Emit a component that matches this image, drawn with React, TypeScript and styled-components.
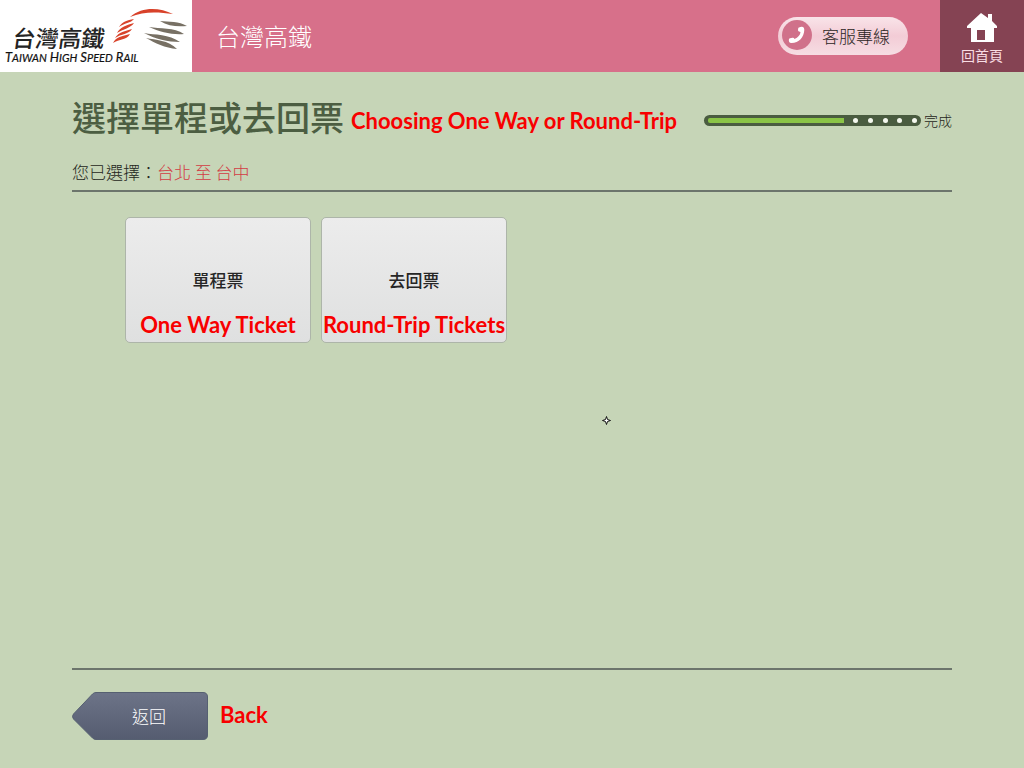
import React from "react";
import styled, { createGlobalStyle } from "styled-components";

const cjk = `"Noto Sans CJK TC", "Noto Sans", sans-serif`;
const latin = `Lato, "Open Sans", sans-serif`;

const GlobalStyle = createGlobalStyle`
  *, *::before, *::after { box-sizing: border-box; }
  body {
    margin: 0;
    background: #c6d5b7;
    color: #1f2620;
    font-family: ${cjk};
  }
  button { font-family: inherit; cursor: pointer; }
`;

const Page = styled.div`
  position: relative;
  display: flex;
  flex-direction: column;
  min-height: 100vh;
`;

const Header = styled.header`
  display: flex;
  height: 72px;
  background: #d7708a;
`;

const LogoLink = styled.a`
  display: flex;
  width: 192px;
  background: #fff;
`;

const SiteName = styled.div`
  flex: 1;
  align-self: center;
  padding-left: 24px;
  color: #fff;
  font-size: 24px;
  font-weight: 300;
  line-height: 32px;
`;

const HotlineButton = styled.button`
  display: flex;
  align-items: center;
  align-self: center;
  gap: 10px;
  width: 130px;
  height: 38px;
  margin-right: 32px;
  padding: 0 4px 2px;
  border: 0;
  border-radius: 19px;
  background: linear-gradient(#f9e4e9, #f3ccd6 50%, #f6dde3);
  color: #2a1f23;
  font-size: 17px;
  font-weight: 300;
  white-space: nowrap;
`;

const HomeLink = styled.a`
  display: flex;
  flex-direction: column;
  align-items: center;
  gap: 3px;
  width: 84px;
  padding-top: 12px;
  background: #854353;
  color: #f9dde4;
  font-size: 14px;
  line-height: 20px;
  text-decoration: none;
`;

const Content = styled.main`
  display: flex;
  flex: 1;
  flex-direction: column;
  padding: 24px 72px 0;
`;

const TitleRow = styled.div`
  display: flex;
  align-items: center;
  height: 48px;
`;

const Title = styled.h1`
  align-self: flex-start;
  margin: 0;
  color: #4c5e42;
  font-size: 34px;
  font-weight: 500;
  line-height: 42px;
  white-space: nowrap;
`;

const Note = styled.span`
  color: #f80000;
  font-family: ${latin};
  font-size: 22px;
  font-weight: 700;
  line-height: 28px;
  white-space: nowrap;
`;

const TitleNote = styled(Note)`
  margin-left: 7px;
  padding-top: 2px;
`;

const Progress = styled.div`
  display: flex;
  align-items: center;
  gap: 3px;
  margin-left: auto;
  font-size: 14px;
  line-height: 20px;
  font-weight: 300;
  white-space: nowrap;
`;

const Track = styled.div`
  display: flex;
  align-items: center;
  width: 217px;
  height: 11px;
  padding: 0 4px;
  border-radius: 6px;
  background: #4a5c40;
`;

const Fill = styled.div`
  flex: 1;
  height: 5px;
  border-radius: 2px 0 0 2px;
  background: #8ac446;
`;

const Dots = styled.div`
  display: flex;
  justify-content: space-between;
  width: 73px;
  padding-left: 9px;
`;

const Dot = styled.i`
  width: 5px;
  height: 5px;
  border-radius: 50%;
  background: #f4f8ee;
`;

const Selection = styled.p`
  margin: 0;
  padding: 16px 0 6px;
  border-bottom: 2px solid #6c756c;
  font-size: 17px;
  font-weight: 300;
  line-height: 24px;
`;

const Route = styled.span`
  color: #d23c44;
`;

const Tickets = styled.div`
  display: flex;
  flex-wrap: wrap;
  gap: 10px;
  padding: 25px 53px;
`;

const TicketButton = styled.button`
  display: flex;
  flex-direction: column;
  align-items: center;
  justify-content: flex-end;
  gap: 19px;
  width: 186px;
  height: 126px;
  padding: 0 0 3px;
  border: 1px solid #adb5a9;
  border-radius: 5px;
  background: linear-gradient(#ececec, #dfe0e0);
  color: #262626;
  font-size: 17px;
  font-weight: 500;
  line-height: 24px;
`;

const Footer = styled.footer`
  display: flex;
  align-items: center;
  gap: 12px;
  margin: 0 72px;
  padding: 22px 0 28px;
  border-top: 2px solid #6c756c;
`;

const BackButton = styled.button`
  position: relative;
  width: 136px;
  height: 48px;
  padding: 0 0 2px 18px;
  border: 0;
  background: none;
  color: #fff;
  font-size: 17px;
  font-weight: 300;
`;

const BackShape = styled.svg`
  position: absolute;
  inset: 0;
`;

const BackText = styled.span`
  position: relative;
`;

const BackNote = styled(Note)`
  padding-bottom: 2px;
`;

const Pointer = styled.svg`
  position: absolute;
  left: 602px;
  top: 416px;
`;

const Logo = () => (
  <svg width="192" height="72" viewBox="0 0 192 72" role="img" aria-label="台灣高鐵 Taiwan High Speed Rail">
    <g transform="skewX(-8)">
      <text x="18" y="47" fontFamily={cjk} fontSize="23" fontWeight="500" fill="#242424">台灣高鐵</text>
    </g>
    <text x="5" y="62" fontFamily={latin} fontStyle="italic" fontSize="13" fontWeight="400" fill="#111" stroke="#111" strokeWidth="0.2">
      T<tspan fontSize="11">AIWAN</tspan> H<tspan fontSize="11">IGH</tspan> S<tspan fontSize="11">PEED</tspan> R<tspan fontSize="11">AIL</tspan>
    </text>
    <g fill="#d8422a">
      <path d="M130 17C143 6 160 8 173 14C158 12 144 11 130 17Z" />
      <path d="M119 27C122 22 127 20 134 19C131 23 124 23 119 27Z" />
      <path d="M117 33C120 27 127 25 134 23C131 28 123 29 117 33Z" />
      <path d="M115 38C119 32 125 31 132 29C129 34 121 34 115 38Z" />
      <path d="M113 43C116 37 122 36 130 34C127 40 119 39 113 43Z" />
    </g>
    <g fill="#777064">
      <path d="M160 21C169 22 179 21 187 26C177 27 168 26 160 21Z" />
      <path d="M149 27C160 29 174 27 184 34C172 35 160 32 149 27Z" />
      <path d="M144 33C155 35 169 34 180 42C168 42 155 39 144 33Z" />
      <path d="M146 38C156 40 168 40 177 49C165 48 155 43 146 38Z" />
    </g>
  </svg>
);

const PhoneIcon = () => (
  <svg width="30" height="30" viewBox="0 0 30 30" aria-hidden="true">
    <circle cx="15" cy="15" r="15" fill="#d0718a" />
    <path d="M17 7.500Q19 6.500 21 7Q22.300 7.500 22.300 10C22 17 17 23 9.500 23Q7.500 23 7 21.500L6.800 20Q6.800 18.500 8 18.200L10.500 17.700Q12 17.400 12.500 19C16 17.500 18.300 15 18.500 12L17 11.500Q16 11 16 10L16.200 8.500Q16.300 7.700 17 7.500Z" fill="#fff" />
  </svg>
);

const HomeIcon = () => (
  <svg width="32" height="30" viewBox="0 0 32 30" aria-hidden="true">
    <path fillRule="evenodd" fill="#fff" d="M15 1L22 6V2H26V9L31 14V16H28V30H5V16H1V14ZM11 18V28H19V18Z" />
  </svg>
);

const tickets = [
  { zh: "單程票", en: "One Way Ticket" },
  { zh: "去回票", en: "Round-Trip Tickets" },
];

export default function App() {
  return (
    <>
      <GlobalStyle />
      <Page>
        <Header>
          <LogoLink href="#home"><Logo /></LogoLink>
          <SiteName>台灣高鐵</SiteName>
          <HotlineButton type="button"><PhoneIcon />客服專線</HotlineButton>
          <HomeLink href="#home"><HomeIcon />回首頁</HomeLink>
        </Header>
        <Content>
          <TitleRow>
            <Title>選擇單程或去回票</Title>
            <TitleNote>Choosing One Way or Round-Trip</TitleNote>
            <Progress>
              <Track>
                <Fill />
                <Dots>{[0, 1, 2, 3, 4].map((n) => <Dot key={n} />)}</Dots>
              </Track>
              完成
            </Progress>
          </TitleRow>
          <Selection>您已選擇：<Route>台北 至 台中</Route></Selection>
          <Tickets>
            {tickets.map((t) => (
              <TicketButton type="button" key={t.en}>
                <span>{t.zh}</span>
                <Note>{t.en}</Note>
              </TicketButton>
            ))}
          </Tickets>
        </Content>
        <Footer>
          <BackButton type="button">
            <BackShape width="136" height="48" viewBox="0 0 136 48" aria-hidden="true">
              <defs>
                <linearGradient id="back" x1="0" y1="0" x2="0" y2="1">
                  <stop offset="0" stopColor="#6d7488" />
                  <stop offset="1" stopColor="#555c70" />
                </linearGradient>
              </defs>
              <path d="M24 0.5H131Q135.500 0.500 135.500 5V43Q135.500 47.500 131 47.500H24Q22 47.500 20.500 46L1.500 27Q-0.500 24.500 1.500 22L20.500 2Q22 0.500 24 0.500Z" fill="url(#back)" stroke="#566071" />
            </BackShape>
            <BackText>返回</BackText>
          </BackButton>
          <BackNote>Back</BackNote>
        </Footer>
        <Pointer width="9" height="9" viewBox="0 0 9 9" aria-hidden="true">
          <path d="M4.500 0.500L5.500 3.500L8.500 4.500L5.500 5.500L4.500 8.500L3.500 5.500L0.500 4.500L3.500 3.500Z" fill="#fff" stroke="#111" />
        </Pointer>
      </Page>
    </>
  );
}
